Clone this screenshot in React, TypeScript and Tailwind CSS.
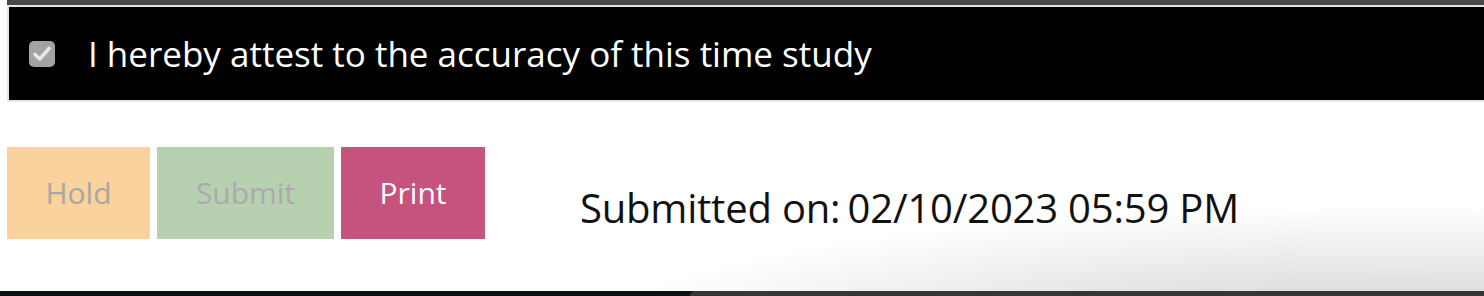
import React from "react";

const buttons = [
  { label: "Hold", width: "w-[143px]", cls: "bg-[#f9d39b] text-[#aba6a2]" },
  { label: "Submit", width: "w-[177px]", cls: "bg-[#b7d0b0] text-[#aea9ae]" },
  { label: "Print", width: "w-[144px]", cls: "bg-[#c6537d] text-white" },
];

const TimeStudyFooter = () => {
  return (
    <div className="w-[1484px] h-[296px] bg-white flex flex-col overflow-hidden font-['Open_Sans',sans-serif]">
      <div className="pl-[7px]">
        <div className="h-[5px] bg-[#4a4a4a]" />
        <div className="h-[97px] bg-black border-2 border-r-0 border-[#e6e6e6] flex items-center pl-[20px]">
          <span className="w-[26px] h-[26px] rounded-[5px] bg-[#a3a3a3] flex items-center justify-center">
            <svg width="22" height="22" viewBox="0 0 22 22" fill="none">
              <path
                d="M4 11.5 L8.8 16 L18 5.5"
                stroke="#e8e8e8"
                strokeWidth="3.6"
                strokeLinecap="round"
                strokeLinejoin="round"
              />
            </svg>
          </span>
          <span className="ml-[33px] text-white text-[35px] leading-none">
            I hereby attest to the accuracy of this time study
          </span>
        </div>
      </div>

      <div className="flex-1 flex items-start pt-[45px] pl-[7px] bg-[radial-gradient(820px_135px_at_1400px_238px,#d6d6d6_0%,#e0e0e0_40%,#ffffff_100%)]">
        <div className="flex gap-[7px]">
          {buttons.map((b) => (
            <button
              key={b.label}
              disabled={b.label !== "Print"}
              className={`${b.width} h-[92px] ${b.cls} text-[30px] leading-none flex items-center justify-center`}
            >
              {b.label}
            </button>
          ))}
        </div>
        <span className="ml-[95px] mt-[41px] text-[40px] leading-none text-[#111] tracking-[-0.2px]">
          Submitted on:<span className="ml-[-3px]"> 02/10/2023 05:59 PM</span>
        </span>
      </div>

      <div className="h-[5px] flex bg-[#0b1117]">
        <div className="w-[690px]" />
        <div className="flex-1 bg-[#363636] rounded-tl-[10px]" />
      </div>
    </div>
  );
};

export default function App() {
  return <TimeStudyFooter />;
}
